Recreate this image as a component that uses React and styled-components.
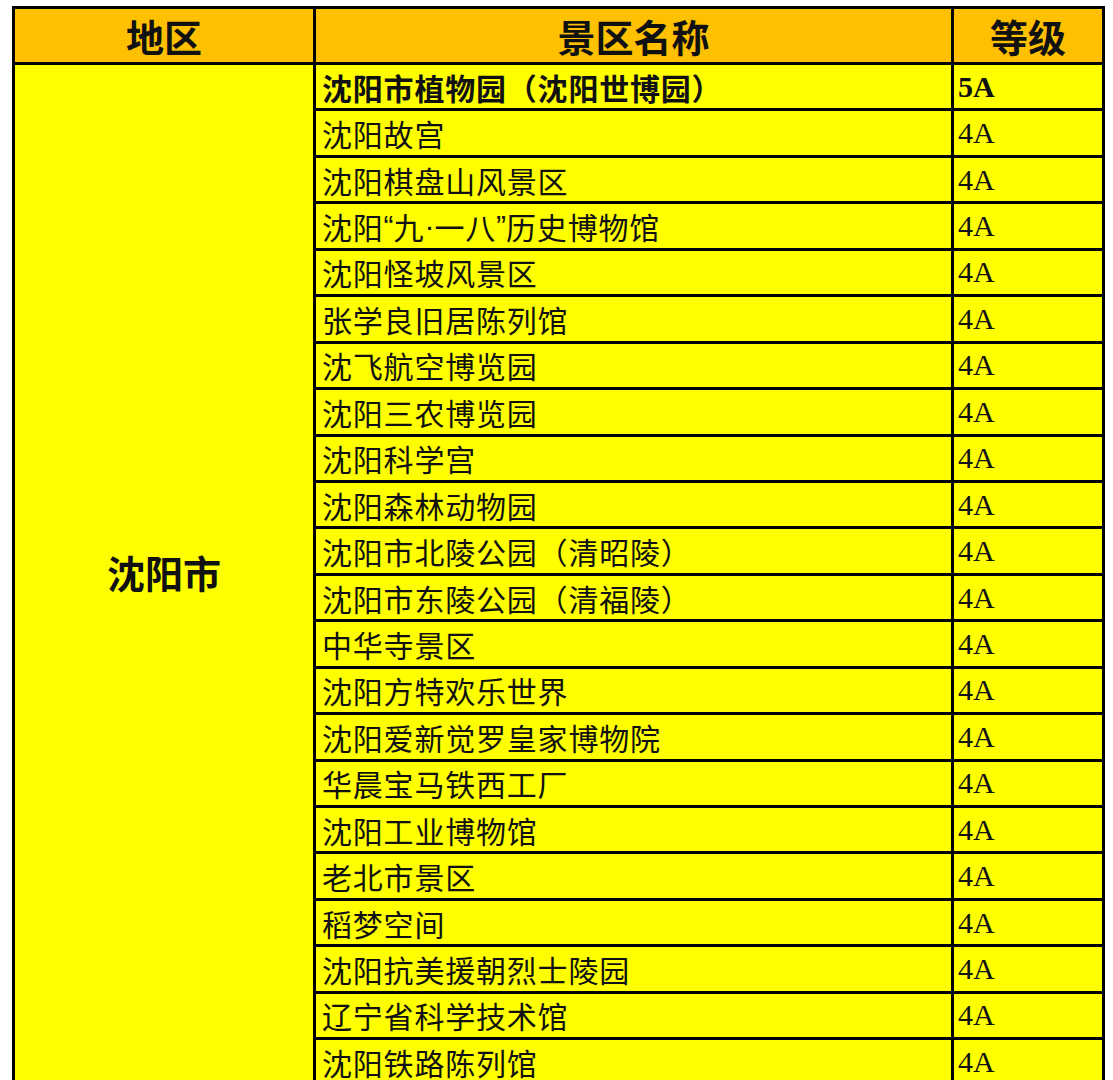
import React from "react";
import styled, { createGlobalStyle } from "styled-components";

const Global = createGlobalStyle`
  html, body { margin: 0; padding: 0; background: #ffffff; }
  body { font-family: "Noto Sans CJK SC", "Noto Sans", sans-serif; overflow: hidden; }
`;

const Page = styled.div`
  width: 1113px;
  height: 1080px;
  overflow: hidden;
  padding: 6px 0 0 12px;
  box-sizing: border-box;
`;

const Grid = styled.div`
  display: grid;
  width: 1093px;
  box-sizing: border-box;
  grid-template-columns: 298px 635px 148px;
  grid-template-rows: 53px repeat(22, 43.45px);
  gap: 3px;
  padding: 3px;
  background: #000;
`;

const Head = styled.div`
  background: #ffc000;
  display: flex;
  align-items: center;
  justify-content: center;
  font-size: 38px;
  font-weight: 700;
  color: #111;
  line-height: 1;
`;

const Region = styled.div`
  grid-row: span 22;
  background: #ffff00;
  display: flex;
  align-items: center;
  justify-content: center;
  font-size: 38px;
  font-weight: 700;
  color: #111;
  padding-bottom: 6px;
`;

const Name = styled.div`
  background: #ffff00;
  display: flex;
  align-items: center;
  padding-left: 6px;
  font-size: 30px;
  letter-spacing: 0.8px;
  font-weight: ${(p) => (p.$bold ? 700 : 400)};
  color: #111;
  white-space: nowrap;
  line-height: 1;
`;

const Latin = styled.span`
  font-family: "Liberation Sans", "Noto Sans", sans-serif;
  letter-spacing: 0;
`;

const Grade = styled.div`
  background: #ffff00;
  display: flex;
  align-items: center;
  padding-left: 4px;
  font-family: "Liberation Serif", "Times New Roman", serif;
  font-size: 30px;
  font-weight: ${(p) => (p.$bold ? 700 : 400)};
  color: #111;
  line-height: 1;
`;

const rows = [
  ["沈阳市植物园（沈阳世博园）", "5A", true],
  ["沈阳故宫", "4A"],
  ["沈阳棋盘山风景区", "4A"],
  [
    <>
      沈阳<Latin>“</Latin>九<Latin>·</Latin>一八<Latin>”</Latin>历史博物馆
    </>,
    "4A",
  ],
  ["沈阳怪坡风景区", "4A"],
  ["张学良旧居陈列馆", "4A"],
  ["沈飞航空博览园", "4A"],
  ["沈阳三农博览园", "4A"],
  ["沈阳科学宫", "4A"],
  ["沈阳森林动物园", "4A"],
  ["沈阳市北陵公园（清昭陵）", "4A"],
  ["沈阳市东陵公园（清福陵）", "4A"],
  ["中华寺景区", "4A"],
  ["沈阳方特欢乐世界", "4A"],
  ["沈阳爱新觉罗皇家博物院", "4A"],
  ["华晨宝马铁西工厂", "4A"],
  ["沈阳工业博物馆", "4A"],
  ["老北市景区", "4A"],
  ["稻梦空间", "4A"],
  ["沈阳抗美援朝烈士陵园", "4A"],
  ["辽宁省科学技术馆", "4A"],
  ["沈阳铁路陈列馆", "4A"],
];

export default function App() {
  return (
    <Page>
      <Global />
      <Grid>
        <Head>地区</Head>
        <Head>景区名称</Head>
        <Head>等级</Head>
        <Region>沈阳市</Region>
        {rows.map(([name, grade, bold], i) => (
          <React.Fragment key={i}>
            <Name $bold={bold}>{name}</Name>
            <Grade $bold={bold}>{grade}</Grade>
          </React.Fragment>
        ))}
      </Grid>
    </Page>
  );
}
